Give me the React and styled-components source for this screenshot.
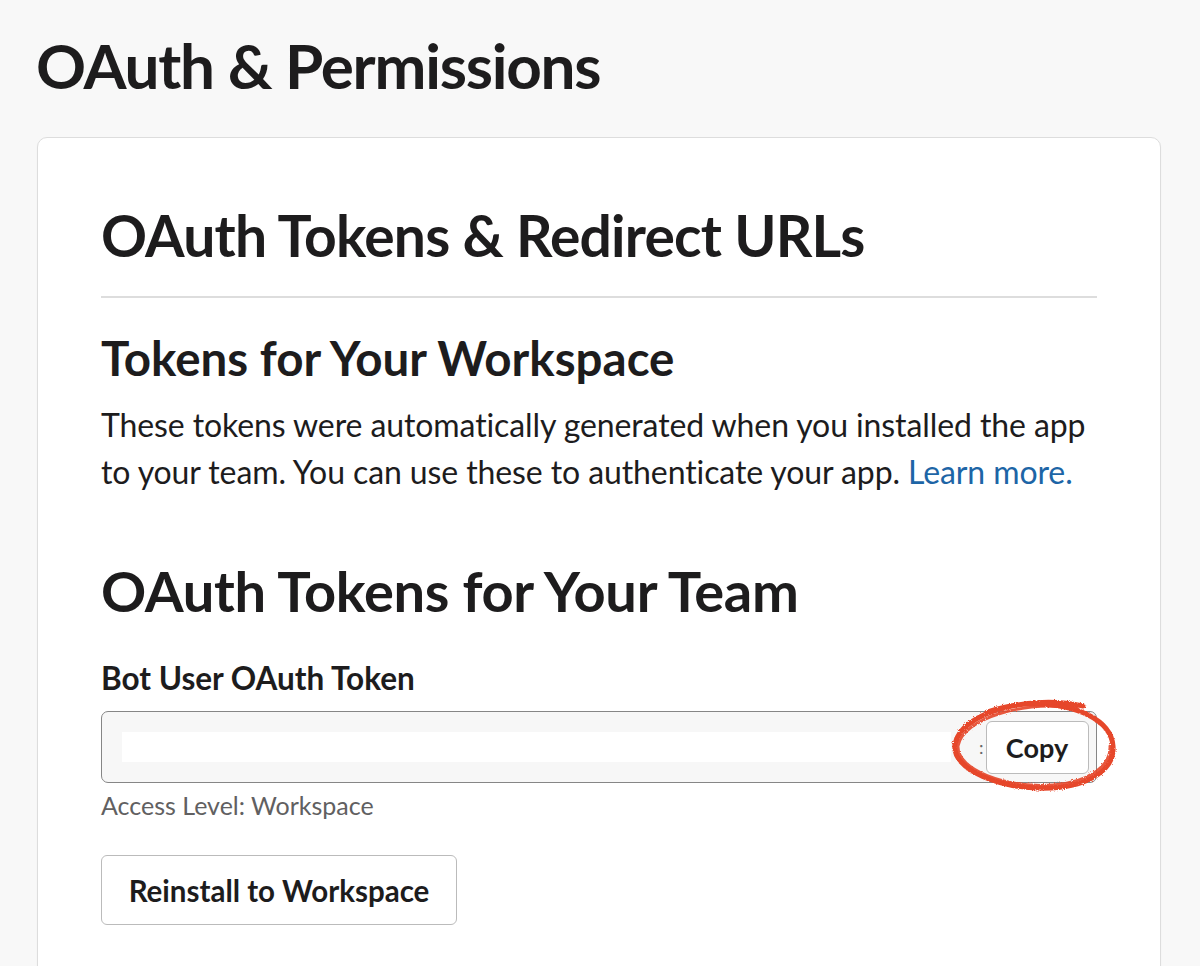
import React from 'react';
import styled, { createGlobalStyle } from 'styled-components';

const GlobalStyle = createGlobalStyle`
  html, body {
    margin: 0;
    padding: 0;
    background: #f8f8f8;
    font-family: Lato, "Noto Sans", sans-serif;
    color: #1d1c1d;
  }
`;

const Page = styled.div`
  padding: 27px 39px 0 37px;
  height: 966px;
  box-sizing: border-box;
  overflow: hidden;
`;

const PageTitle = styled.h1`
  margin: 0 0 34px -1px;
  font-size: 62px;
  line-height: 76px;
  font-weight: 700;
  letter-spacing: -1.25px;
`;

const Card = styled.section`
  background: #fff;
  border: 1px solid #dddddd;
  border-radius: 10px;
  box-shadow: 0 1px 2px rgba(0, 0, 0, 0.04);
  padding: 63px 63px 80px 63px;
`;

const CardTitle = styled.h2`
  margin: 0;
  font-size: 57px;
  line-height: 68px;
  font-weight: 700;
  letter-spacing: -0.8px;
`;

const Divider = styled.hr`
  border: none;
  border-top: 2px solid #dddddd;
  margin: 27px 0 32px;
`;

const SectionTitle = styled.h3`
  margin: 0;
  font-size: ${(p) => p.size}px;
  line-height: ${(p) => p.lh}px;
  letter-spacing: ${(p) => p.ls || 0}px;
  font-weight: 700;
`;

const Text = styled.p`
  margin: 15px 0 63px;
  font-size: 32px;
  line-height: 47px;
  letter-spacing: -0.1px;
  font-weight: 400;
`;

const Link = styled.a`
  color: #1d65a6;
  text-decoration: none;
`;

const Label = styled.div`
  margin: 35px 0 14px;
  font-size: 31.5px;
  line-height: 38px;
  font-weight: 700;
`;

const TokenField = styled.div`
  position: relative;
  display: flex;
  align-items: center;
  height: 72px;
  box-sizing: border-box;
  border: 1.5px solid #868686;
  border-radius: 7px;
  background: #f7f7f7;
  padding: 0 7.5px 0 19.5px;
`;

const Redacted = styled.div`
  flex: 1;
  height: 30px;
  background: #fff;
`;

const Clip = styled.span`
  width: 35px;
  font-size: 18px;
  color: #666;
  text-align: right;
  padding-right: 2px;
  box-sizing: border-box;
`;

const Button = styled.button`
  font-family: Lato, "Noto Sans", sans-serif;
  font-weight: 700;
  font-size: ${(p) => p.fs}px;
  color: #1d1c1d;
  background: #fff;
  border: 1.5px solid #bbbbbb;
  border-radius: 6px;
  height: ${(p) => p.h}px;
  width: ${(p) => p.w}px;
  padding: 0;
  cursor: pointer;
`;

const Hint = styled.div`
  margin: 7px 0 0;
  font-size: 25px;
  line-height: 30px;
  color: #616061;
`;

const Actions = styled.div`
  margin-top: 35px;
`;

const Scribble = styled.svg`
  position: absolute;
  right: -21px;
  top: -14px;
  width: 166px;
  height: 94px;
  pointer-events: none;
  overflow: visible;
`;

const RedCircle = () => (
  <Scribble viewBox="0 0 166 94">
    <defs>
      <filter id="rough" x="-10%" y="-10%" width="120%" height="120%">
        <feTurbulence type="fractalNoise" baseFrequency="0.9" numOctaves="2" seed="3" />
        <feDisplacementMap in="SourceGraphic" scale="3" />
      </filter>
    </defs>
    <g fill="none" stroke="#e6462a" strokeLinecap="round" filter="url(#rough)">
      <path
        d="M132 8 C 80 -4, 10 14, 4 46 C 0 72, 50 92, 100 90 C 140 88, 164 70, 162 48 C 160 22, 126 6, 82 6 C 64 6, 48 10, 36 14"
        strokeWidth="5"
      />
      <path
        d="M126 10 C 74 2, 12 20, 7 48 C 6 72, 54 90, 102 87 C 138 84, 160 68, 159 48"
        strokeWidth="3"
        opacity="0.9"
      />
    </g>
  </Scribble>
);

export default function App() {
  return (
    <>
      <GlobalStyle />
      <Page>
        <PageTitle>OAuth &amp; Permissions</PageTitle>
        <Card>
          <CardTitle>OAuth Tokens &amp; Redirect URLs</CardTitle>
          <Divider />
          <SectionTitle size={47.5} lh={56}>Tokens for Your Workspace</SectionTitle>
          <Text>
            These tokens were automatically generated when you installed the app to your team. You can use these to
            authenticate your app. <Link href="#">Learn more.</Link>
          </Text>
          <SectionTitle size={56} lh={66} ls={-0.3}>OAuth Tokens for Your Team</SectionTitle>
          <Label>Bot User OAuth Token</Label>
          <TokenField>
            <Redacted />
            <Clip>:</Clip>
            <Button fs={27} h={53} w={103}>Copy</Button>
            <RedCircle />
          </TokenField>
          <Hint>Access Level: Workspace</Hint>
          <Actions>
            <Button fs={29.5} h={70} w={356}>Reinstall to Workspace</Button>
          </Actions>
        </Card>
      </Page>
    </>
  );
}
